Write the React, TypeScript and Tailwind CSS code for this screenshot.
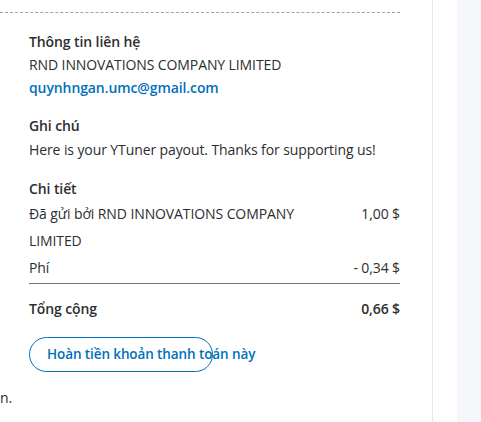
export default function App() {
  return (
    <div className="flex h-[422px] w-[481px] overflow-hidden bg-white font-['Open_Sans',sans-serif] text-[14px] tracking-[-0.1px] text-[#2c2e2f]">
      <div className="relative w-[433px] shrink-0 border-r border-[#e8e9ea]">
        <div className="mt-[12px] w-[400px] border-t border-dashed border-[#9da3a6]" />

        <div className="pl-[29px] pr-[32px]">
          <section className="mt-[17px] leading-[23px]">
            <h3 className="font-semibold">Thông tin liên hệ</h3>
            <p>RND INNOVATIONS COMPANY LIMITED</p>
            <p className="font-semibold text-[#0070ba]">quynhngan.umc@gmail.com</p>
          </section>

          <section className="mt-[15px] leading-[23px]">
            <h3 className="font-semibold">Ghi chú</h3>
            <p className="mt-[1px]">Here is your YTuner payout. Thanks for supporting us!</p>
          </section>

          <section className="mt-[16px]">
            <h3 className="font-semibold leading-[23px]">Chi tiết</h3>
            <div className="flex justify-between leading-[27px]">
              <span className="w-[285px]">Đã gửi bởi RND INNOVATIONS COMPANY LIMITED</span>
              <span>1,00 $</span>
            </div>
            <div className="flex justify-between border-b border-[#6c7378] pb-[2px] leading-[27px]">
              <span>Phí</span>
              <span>- 0,34 $</span>
            </div>
            <div className="mt-[11px] flex justify-between font-semibold leading-[27px]">
              <span>Tổng cộng</span>
              <span>0,66 $</span>
            </div>
          </section>

          <button className="mt-[15px] h-[35px] w-[184px] whitespace-nowrap rounded-full border border-[#0070ba] pl-[17px] text-left text-[13.5px] font-semibold text-[#0070ba]">
            Hoàn tiền khoản thanh toán này
          </button>
        </div>

        <p className="mt-[16px] leading-[20px]">n.</p>
      </div>
      <div className="w-[24px] shrink-0 bg-white" />
      <div className="flex-1 bg-[#f5f7fa]" />
    </div>
  );
}
